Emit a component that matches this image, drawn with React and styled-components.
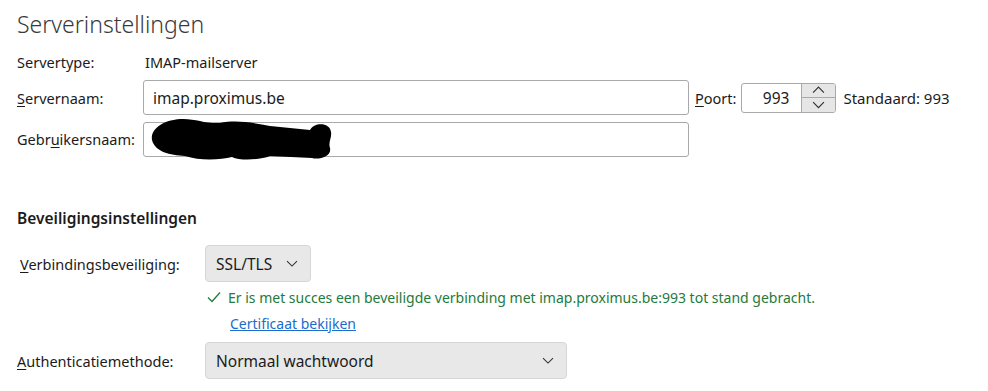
import React from 'react';
import styled, { createGlobalStyle } from 'styled-components';

const GlobalStyle = createGlobalStyle`
  html, body {
    margin: 0;
    padding: 0;
    background: #ffffff;
  }
  body {
    font-family: "Noto Sans", "Open Sans", sans-serif;
    color: #1b1b1b;
  }
`;

const Page = styled.div`
  width: 988px;
  height: 391px;
  box-sizing: border-box;
  padding: 8px 0 0 17px;
  overflow: hidden;
  font-size: 14.5px;
`;

const Title = styled.h1`
  margin: 0;
  font-size: 23px;
  font-weight: 300;
  color: #3a3a3a;
  line-height: 32px;
`;

const Section = styled.div`
  display: flex;
  flex-direction: column;
`;

const Row = styled.div`
  display: flex;
  align-items: center;
  height: ${p => p.h || 35}px;
  margin-top: ${p => p.mt || 0}px;
`;

const Label = styled.label`
  width: ${p => p.w}px;
  flex: none;
  padding-left: ${p => p.pl || 0}px;
  box-sizing: border-box;
  white-space: nowrap;
`;

const Accel = styled.span`
  text-decoration: underline;
  text-underline-offset: 2px;
`;

const Value = styled.span`
  padding-left: 2px;
`;

const TextBox = styled.div`
  position: relative;
  width: 546px;
  height: 35px;
  box-sizing: border-box;
  border: 1px solid #a9a9a9;
  border-radius: 3px;
  padding: 0 9px;
  display: flex;
  align-items: center;
  font-size: 15.5px;
  background: #fff;
`;

const Redaction = styled.svg`
  position: absolute;
  left: 4px;
  top: -5px;
`;

const PortLabel = styled.label`
  margin-left: 6px;
  margin-right: 5px;
`;

const Spin = styled.div`
  display: flex;
  width: 95px;
  height: 30px;
  box-sizing: border-box;
  border: 1px solid #a9a9a9;
  border-radius: 3px;
  overflow: hidden;
`;

const SpinValue = styled.div`
  flex: 1;
  display: flex;
  align-items: center;
  justify-content: flex-end;
  padding-right: 12px;
  font-size: 15.5px;
`;

const SpinButtons = styled.div`
  width: 33px;
  display: flex;
  flex-direction: column;
  border-left: 1px solid #a9a9a9;
  background: #e6e6e6;
`;

const SpinBtn = styled.div`
  flex: 1;
  display: flex;
  align-items: center;
  justify-content: center;
  border-top: ${p => (p.bottom ? '1px solid #a9a9a9' : 'none')};
`;

const Default = styled.span`
  margin-left: 7px;
  font-size: 15px;
`;

const SubHeading = styled.h2`
  margin: 51px 0 0;
  font-size: 15.5px;
  font-weight: 600;
  line-height: 22px;
  color: #1b1b1b;
`;

const SelectButton = styled.div`
  width: ${p => p.w}px;
  height: 37px;
  box-sizing: border-box;
  border: 1px solid #d6d6d6;
  border-radius: 4px;
  background: #e8e8e8;
  display: flex;
  align-items: center;
  justify-content: space-between;
  padding: 0 12px 0 10px;
  font-size: 15.5px;
`;

const Status = styled.div`
  display: flex;
  align-items: center;
  gap: 7px;
  margin: 4px 0 0 190px;
  color: #247a3b;
  height: 22px;
  font-size: 14px;
`;

const Link = styled.a`
  margin: 5px 0 0 213px;
  color: #1a6ccd;
  text-decoration: underline;
  height: 22px;
  line-height: 22px;
  align-self: flex-start;
  font-size: 14px;
`;

const Chevron = ({ up, size = 12, color = '#333' }) => (
  <svg width={size} height={size * 0.6} viewBox="0 0 12 7">
    <path
      d={up ? 'M1 6 L6 1 L11 6' : 'M1 1 L6 6 L11 1'}
      fill="none"
      stroke={color}
      strokeWidth="1.1"
    />
  </svg>
);

export default function App() {
  return (
    <>
      <GlobalStyle />
      <Page>
        <Title>Serverinstellingen</Title>
        <Section>
          <Row h={30} mt={7}>
            <Label w={126}>Servertype:</Label>
            <Value>IMAP-mailserver</Value>
          </Row>
          <Row mt={3}>
            <Label w={126}><Accel>S</Accel>ervernaam:</Label>
            <TextBox>imap.proximus.be</TextBox>
            <PortLabel><Accel>P</Accel>oort:</PortLabel>
            <Spin>
              <SpinValue>993</SpinValue>
              <SpinButtons>
                <SpinBtn><Chevron up size={13} /></SpinBtn>
                <SpinBtn bottom><Chevron size={13} /></SpinBtn>
              </SpinButtons>
            </Spin>
            <Default>Standaard: 993</Default>
          </Row>
          <Row mt={7} h={34}>
            <Label w={126}>Gebr<Accel>u</Accel>ikersnaam:</Label>
            <TextBox>
              <Redaction width="186" height="46" viewBox="148 118 186 46">
                <path
                  d="M152 140 C 150 128, 165 120, 180 119 C 195 118, 205 124, 220 123 C 235 120, 250 122, 270 126 L 310 130 C 314 122, 330 122, 331 132 C 332 138, 328 142, 330 148 C 332 156, 320 160, 312 158 L 270 156 C 260 160, 240 161, 232 157 C 220 160, 200 161, 185 156 C 170 155, 155 152, 152 140 Z"
                  fill="#000"
                />
              </Redaction>
            </TextBox>
          </Row>
        </Section>
        <SubHeading>Beveiligingsinstellingen</SubHeading>
        <Section>
          <Row mt={16} h={37}>
            <Label w={188} pl={3}><Accel>V</Accel>erbindingsbeveiliging:</Label>
            <SelectButton w={106}>
              SSL/TLS
              <Chevron size={12} />
            </SelectButton>
          </Row>
          <Status>
            <svg width="14" height="12" viewBox="0 0 14 12">
              <path d="M1 6.5 L5 10.5 L13 1.5" fill="none" stroke="#247a3b" strokeWidth="1.3" />
            </svg>
            Er is met succes een beveiligde verbinding met imap.proximus.be:993 tot stand gebracht.
          </Status>
          <Link href="#">Certificaat bekijken</Link>
          <Row mt={7} h={37}>
            <Label w={188}><Accel>A</Accel>uthenticatiemethode:</Label>
            <SelectButton w={362}>
              Normaal wachtwoord
              <Chevron size={12} />
            </SelectButton>
          </Row>
        </Section>
      </Page>
    </>
  );
}
